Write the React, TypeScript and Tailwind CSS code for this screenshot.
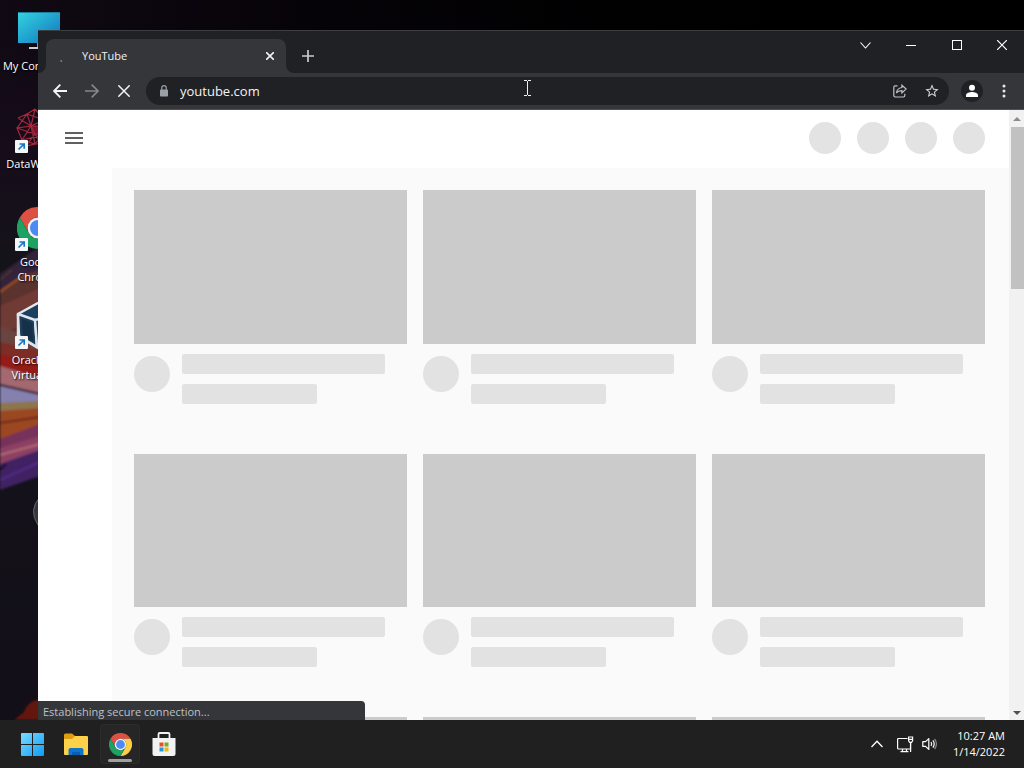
import type { ReactNode } from "react";

const videos = Array.from({ length: 9 }, (_, i) => i);
const headerDots = [0, 1, 2, 3];

function ChromeLogo({ className }: { className?: string }) {
  return (
    <svg viewBox="3 3 42 42" className={className} aria-hidden="true">
      <path d="M5.8 13.5A21 21 0 0 1 42.2 13.5H24A10.5 10.5 0 0 0 14.9 29.25Z" fill="#dd5144" />
      <path d="M42.2 13.5A21 21 0 0 1 24 45L33.1 29.25A10.5 10.5 0 0 0 24 13.5Z" fill="#ffcd46" />
      <path d="M24 45A21 21 0 0 1 5.8 13.5L14.9 29.25A10.5 10.5 0 0 0 33.1 29.25Z" fill="#1da261" />
      <circle cx="24" cy="24" r="10.5" fill="#f1f1f1" />
      <circle cx="24" cy="24" r="8" fill="#4c8bf5" />
    </svg>
  );
}

function ComputerIcon() {
  return (
    <svg viewBox="0 0 48 48" className="size-12" aria-hidden="true">
      <defs>
        <linearGradient id="screen" x1="0" y1="0" x2="1" y2="1">
          <stop offset="0" stopColor="#35d3e0" />
          <stop offset="1" stopColor="#0f74bd" />
        </linearGradient>
      </defs>
      <rect x="4" y="4" width="42" height="31" fill="url(#screen)" />
      <path d="M4 4.5H46" stroke="#1a7f9c" />
      <path d="M23 35h4v4h-4z" fill="#8c9094" />
      <path d="M15 39h20v2H15z" fill="#c9cdd0" />
    </svg>
  );
}

function DataWarriorIcon() {
  return (
    <svg viewBox="0 0 48 48" className="size-12" fill="none" stroke="#a5283d" strokeWidth="1.2" aria-hidden="true">
      <path d="M4 12l9-4 8-5M3 22l10-14 4 12-14 2 5 12 9-14 13-6-9-11M8 34l4 6 9-2-4-18M4 12l13 8M17 20l11 9-7 9-13-4 20-5M13 8l17 6-2 15M12 40l9-12 9 15M3 22l18 6M21 3l-4 17" />
      <path d="M30 14l12 4-14 11 13 8-20 1M28 3l2 11" />
      <path d="M17 20l4 8 7 1-3-9z" fill="#7d1429" />
    </svg>
  );
}

function VirtualBoxIcon() {
  return (
    <svg viewBox="0 0 48 48" className="size-12" strokeLinejoin="round" aria-hidden="true">
      <path d="M4 12L24 1l20 11v22L24 46 4 34z" fill="#1c3f5e" stroke="#e3e8ee" strokeWidth="2.5" />
      <path d="M4 12L21 18l2 27L5 34z" fill="#1d3c57" stroke="#dfe5ec" strokeWidth="2.5" />
      <path d="M21 18L44 12V34L23 45z" fill="#23486a" stroke="#dfe5ec" strokeWidth="2.5" />
      <path d="M8 17l10 4 1 18-10-6z" fill="#17304a" />
    </svg>
  );
}

function DesktopIcon({ label, shortcut, children }: { label: ReactNode; shortcut?: boolean; children: ReactNode }) {
  return (
    <a href="#" className="flex h-[98px] w-19 flex-col items-center text-center">
      <span className="relative block size-12">
        {children}
        {shortcut && (
          <svg viewBox="0 0 13 13" className="absolute bottom-px left-px size-[13px]" aria-hidden="true">
            <rect width="13" height="13" rx="1" fill="#f4f6f8" />
            <path d="M3.5 9.5L8.5 4.5M4.5 4h4.7v4.7" fill="none" stroke="#1976c5" strokeWidth="1.7" />
          </svg>
        )}
      </span>
      <span className="mt-0.5 text-[11px] leading-[15px] whitespace-nowrap text-white [text-shadow:1px_1px_2px_#000]">
        {label}
      </span>
    </a>
  );
}

function Wallpaper() {
  return (
    <svg viewBox="0 0 76 720" className="absolute top-0 left-0 h-[720px] w-19" aria-hidden="true">
      <defs>
        <filter id="soft" x="-20%" y="-5%" width="140%" height="110%">
          <feGaussianBlur stdDeviation="0.8" />
        </filter>
        <linearGradient id="night" x1="0" y1="0" x2="0" y2="1">
          <stop offset="0.05" stopColor="#160c1a" stopOpacity="0" />
          <stop offset="0.2" stopColor="#160c1a" />
          <stop offset="0.35" stopColor="#15131a" />
          <stop offset="1" stopColor="#120f18" />
        </linearGradient>
      </defs>
      <rect width="76" height="720" fill="url(#night)" />
      <g filter="url(#soft)">
        <path d="M0 274L40 246V300H0z" fill="#33223a" />
        <path d="M0 290L22 275 40 270V360H0z" fill="#5a302d" />
        <path d="M0 292L24 275" stroke="#a3531d" strokeWidth="2" />
        <path d="M0 280L12 270" stroke="#5a3a24" strokeWidth="1.5" />
        <path d="M0 306L40 288V322L0 332z" fill="#713b35" />
        <path d="M0 326L40 340V364L0 350z" fill="#6b4440" />
        <path d="M0 342L40 350V366L0 358z" fill="#7c2e28" />
        <path d="M0 354L40 362V378L0 368z" fill="#931a14" />
        <path d="M0 366L40 378V394L0 386z" fill="#a3686f" />
        <path d="M0 384L40 394V404L0 404z" fill="#8580ad" />
        <path d="M0 385L40 394" stroke="#2c1a2d" strokeWidth="2" />
        <path d="M0 403L40 401V412H0z" fill="#8d744e" />
        <path d="M0 411L40 408V436L0 440z" fill="#9b4620" />
        <path d="M0 423L40 417" stroke="#6d2b1c" strokeWidth="2" />
        <path d="M0 439L40 424V444L0 456z" fill="#77305b" />
        <path d="M0 448L40 436V452L0 466z" fill="#8c4164" />
        <path d="M0 455L40 444" stroke="#b26a72" strokeWidth="2" />
        <path d="M0 464L40 450V476L0 490z" fill="#3f2162" />
        <path d="M0 480L40 462" stroke="#4f2c80" strokeWidth="3" />
        <path d="M0 470L6 464" stroke="#150d1d" strokeWidth="2" />
        <path d="M14 720L24 712C26 705 33 699 40 700V720z" fill="#64180c" />
      </g>
      <path d="M40 497Q28 510 38 525" fill="#35353a" stroke="#65666b" />
    </svg>
  );
}

function TabStrip() {
  return (
    <div className="flex h-[43px] shrink-0 border-t border-[#3d3e41] bg-[#202124] pl-2">
      <div className="relative mt-2 flex w-60 items-center rounded-t-lg bg-[#35363a] pr-2">
        <svg viewBox="0 0 8 8" className="absolute bottom-0 -left-2 size-2" aria-hidden="true">
          <path d="M8 0v8H0a8 8 0 0 0 8-8z" fill="#35363a" />
        </svg>
        <svg viewBox="0 0 8 8" className="absolute -right-2 bottom-0 size-2" aria-hidden="true">
          <path d="M0 0v8h8a8 8 0 0 1-8-8z" fill="#35363a" />
        </svg>
        <svg viewBox="0 0 16 16" className="ml-2 size-4" aria-hidden="true">
          <path d="M6.5 12.5l1.5 1" stroke="#7f93c8" strokeWidth="1.3" />
        </svg>
        <span className="ml-3 flex-1 text-[11px] leading-4 text-[#f1f3f4]">YouTube</span>
        <button type="button" aria-label="Close tab" className="flex size-4 items-center justify-center">
          <svg viewBox="0 0 8 8" className="size-2" stroke="#f1f3f4" strokeWidth="1.6" aria-hidden="true">
            <path d="M0 0l8 8M8 0L0 8" />
          </svg>
        </button>
      </div>
      <button type="button" aria-label="New tab" className="mt-[11px] ml-2 flex size-7 items-center justify-center">
        <svg viewBox="0 0 12 12" className="size-3" stroke="#c9cbce" strokeWidth="1.7" aria-hidden="true">
          <path d="M6 0v12M0 6h12" />
        </svg>
      </button>
      <div className="ml-auto flex h-7 text-white">
        <button type="button" aria-label="Search tabs" className="flex w-[46px] items-center justify-center">
          <svg viewBox="0 0 11 7" className="h-[7px] w-[11px]" fill="none" stroke="currentColor" strokeWidth="1.1" aria-hidden="true">
            <path d="M0.5 0.5l5 5.5 5-5.5" />
          </svg>
        </button>
        <button type="button" aria-label="Minimize" className="flex w-[46px] items-center justify-center">
          <span className="h-px w-2.5 bg-white" />
        </button>
        <button type="button" aria-label="Maximize" className="flex w-[46px] items-center justify-center">
          <span className="size-2.5 border border-white" />
        </button>
        <button type="button" aria-label="Close" className="flex w-11 items-center justify-center">
          <svg viewBox="0 0 10 10" className="size-2.5" stroke="currentColor" strokeWidth="1.2" aria-hidden="true">
            <path d="M0 0l10 10M10 0L0 10" />
          </svg>
        </button>
      </div>
    </div>
  );
}

function Toolbar() {
  return (
    <div className="flex h-[37px] shrink-0 items-center border-b border-[#505155] bg-[#35363a] pr-1 pl-1.5">
      <button type="button" aria-label="Back" className="flex size-8 items-center justify-center">
        <svg viewBox="0 0 14 14" className="size-3.5" fill="none" stroke="#f5f6f7" strokeWidth="1.9" aria-hidden="true">
          <path d="M14 7H1.5M7.3 0.7L1 7l6.3 6.3" />
        </svg>
      </button>
      <button type="button" aria-label="Forward" className="flex size-8 items-center justify-center">
        <svg viewBox="0 0 14 14" className="size-3.5" fill="none" stroke="#85868a" strokeWidth="1.7" aria-hidden="true">
          <path d="M0 7h12.5M6.7 0.7L13 7l-6.3 6.3" />
        </svg>
      </button>
      <button type="button" aria-label="Stop loading" className="flex size-8 items-center justify-center">
        <svg viewBox="0 0 12 12" className="size-3" stroke="#f1f3f4" strokeWidth="1.5" aria-hidden="true">
          <path d="M0.3 0.3l11.4 11.4M11.7 0.3L0.3 11.7" />
        </svg>
      </button>
      <div className="mr-[7px] ml-1.5 flex h-7 flex-1 items-center rounded-full bg-[#202124] pr-px pl-3.5">
        <svg viewBox="0 0 8 12" className="h-3 w-2" aria-hidden="true">
          <path d="M1.8 5V2.8a2.2 2.2 0 0 1 4.4 0V5" fill="none" stroke="#9aa0a6" strokeWidth="1.2" />
          <rect y="4.5" width="8" height="7" rx="0.8" fill="#9aa0a6" />
        </svg>
        <input
          type="text"
          aria-label="Address and search bar"
          defaultValue="youtube.com"
          className="ml-3 min-w-0 flex-1 bg-transparent text-[13px] leading-5 text-[#f1f3f4] outline-none"
        />
        <button type="button" aria-label="Share this page" className="flex size-8 items-center justify-center">
          <svg viewBox="0 0 14 14" className="size-3.5" fill="none" stroke="#bdc1c6" strokeWidth="1.2" aria-hidden="true">
            <path d="M4.5 1.8H2.2Q0.8 1.8 0.8 3.2v8.4q0 1.4 1.4 1.4h8.2q1.4 0 1.4-1.4v-1.8" />
            <path d="M8.9 1.2l4.3 3.8-4.3 3.9V6.6Q5.2 6.5 3.4 9 4 4.2 8.9 3.5z" />
          </svg>
        </button>
        <button type="button" aria-label="Bookmark this tab" className="flex size-8 items-center justify-center">
          <svg viewBox="0 0 24 24" className="size-4" fill="#d0d3d6" aria-hidden="true">
            <path d="M22 9.24l-7.19-.62L12 2 9.19 8.63 2 9.24l5.46 4.73L5.82 21 12 17.27 18.18 21l-1.63-7.03L22 9.24zM12 15.4l-3.76 2.27 1-4.28-3.32-2.88 4.38-.38L12 6.1l1.71 4.04 4.38.38-3.32 2.88 1 4.28L12 15.4z" />
          </svg>
        </button>
      </div>
      <button type="button" aria-label="Profile" className="flex size-8 items-center justify-center">
        <svg viewBox="0 0 24 24" className="size-6" aria-hidden="true">
          <circle cx="12" cy="12" r="11" fill="#202124" />
          <circle cx="12" cy="8.7" r="3" fill="#fff" />
          <path d="M6 18v-1.8c0-2 3.6-3.2 6-3.2s6 1.2 6 3.2V18z" fill="#fff" />
        </svg>
      </button>
      <button type="button" aria-label="Menu" className="flex size-8 items-center justify-center">
        <svg viewBox="0 0 4 14" className="h-3.5 w-1" fill="#e8eaed" aria-hidden="true">
          <circle cx="2" cy="2" r="1.5" />
          <circle cx="2" cy="7" r="1.5" />
          <circle cx="2" cy="12" r="1.5" />
        </svg>
      </button>
    </div>
  );
}

function VideoSkeleton() {
  return (
    <div className="h-fit pb-[50px]">
      <div className="aspect-video bg-[#cbcbcb]" />
      <div className="mt-2.5 flex gap-3">
        <div className="mt-0.5 size-9 shrink-0 rounded-full bg-[#e2e2e2]" />
        <div className="flex-1">
          <div className="h-5 w-9/10 rounded-xs bg-[#e2e2e2]" />
          <div className="mt-2.5 h-5 w-3/5 rounded-xs bg-[#e2e2e2]" />
        </div>
      </div>
    </div>
  );
}

function Page() {
  return (
    <div className="flex min-h-0 flex-1 bg-white">
      <div className="flex min-w-0 flex-1 flex-col overflow-hidden">
        <header className="flex h-[58px] shrink-0 items-center justify-between pr-6 pb-0.5 pl-[27px]">
          <button type="button" aria-label="Guide" className="flex w-[18px] flex-col gap-[3px]">
            <span className="h-0.5 bg-[#606060]" />
            <span className="h-0.5 bg-[#606060]" />
            <span className="h-0.5 bg-[#606060]" />
          </button>
          <div className="flex gap-4">
            {headerDots.map((d) => (
              <div key={d} className="size-8 rounded-full bg-[#e3e3e3]" />
            ))}
          </div>
        </header>
        <main className="ml-[74px] grid min-h-0 flex-1 grid-cols-3 content-start gap-x-4 overflow-hidden bg-[#fafafa] pt-[22px] pr-6 pl-[22px]">
          {videos.map((v) => (
            <VideoSkeleton key={v} />
          ))}
        </main>
      </div>
      <div className="flex w-[15px] flex-col items-center bg-[#f1f1f1]">
        <svg viewBox="0 0 15 17" className="h-[17px] w-[15px]" fill="#8b8b8b" aria-hidden="true">
          <path d="M4 11l4-4 4 4z" />
        </svg>
        <div className="ml-0.5 h-[162px] w-[13px] bg-[#c1c1c1]" />
        <svg viewBox="0 0 15 17" className="mt-auto h-[17px] w-[15px]" fill="#505050" aria-hidden="true">
          <path d="M4 8l4 4 4-4z" />
        </svg>
      </div>
    </div>
  );
}

function Taskbar() {
  return (
    <footer className="flex h-12 shrink-0 items-center bg-[#202020] pr-[19px] pl-2.5">
      <button type="button" aria-label="Start" className="flex size-11 items-center justify-center">
        <svg viewBox="0 0 23 23" className="size-[23px]" aria-hidden="true">
          <defs>
            <linearGradient id="win" x1="0" y1="0" x2="1" y2="1">
              <stop offset="0" stopColor="#7bdcff" />
              <stop offset="1" stopColor="#0e9bf5" />
            </linearGradient>
          </defs>
          <path d="M1 0h10v11H0V1q0-1 1-1zM12 0h10q1 0 1 1v10H12zM0 12h11v11H1q-1 0-1-1zM12 12h11v10q0 1-1 1H12z" fill="url(#win)" />
        </svg>
      </button>
      <button type="button" aria-label="File Explorer" className="flex size-11 items-center justify-center">
        <svg viewBox="0 0 24 24" className="size-6" aria-hidden="true">
          <path d="M0 3q0-1.5 1.5-1.5H8L11 4v5H0z" fill="#dc9f12" />
          <path d="M0 7h8l3-3h12q1 0 1 1v17q0 1-1 1H1q-1 0-1-1z" fill="#fbd24a" />
          <path d="M4.5 23v-5q0-2 2-2h11q2 0 2 2v5z" fill="#1273ca" />
          <path d="M8 23v-2q0-1 1-1h6q1 0 1 1v2z" fill="#0b5bb0" />
        </svg>
      </button>
      <button type="button" aria-label="Google Chrome" className="relative flex size-11 items-center justify-center">
        <span className="absolute inset-0.5 rounded border border-[#2c2c2c] bg-[#272626]" />
        <ChromeLogo className="relative size-[23px]" />
        <span className="absolute bottom-1 h-[3px] w-6 rounded-full bg-[#a0a0a0]" />
      </button>
      <button type="button" aria-label="Microsoft Store" className="flex size-11 items-center justify-center">
        <svg viewBox="0 0 24 24" className="size-6" aria-hidden="true">
          <path d="M6.5 6V2.2q0-1.2 1.2-1.2h8.6q1.2 0 1.2 1.2V6" fill="none" stroke="#f2f2f2" strokeWidth="1.8" />
          <path d="M0.5 6h23v16q0 2-2 2h-19q-2 0-2-2z" fill="#f2f2f2" />
          <path d="M7.5 10.5h4v4h-4z" fill="#e5502a" />
          <path d="M12.5 10.5h4v4h-4z" fill="#79ad1e" />
          <path d="M7.5 15.5h4v4h-4z" fill="#1e9ad6" />
          <path d="M12.5 15.5h4v4h-4z" fill="#f2b31b" />
        </svg>
      </button>
      <div className="ml-auto flex items-center text-white">
        <button type="button" aria-label="Show hidden icons" className="mr-3.5">
          <svg viewBox="0 0 12 8" className="h-2 w-3" fill="none" stroke="currentColor" strokeWidth="1.3" aria-hidden="true">
            <path d="M0.5 7L6 1.2 11.5 7" />
          </svg>
        </button>
        <button type="button" aria-label="Network and volume" className="mr-4 flex items-center gap-2">
          <svg viewBox="0 0 17 17" className="size-[17px]" fill="none" stroke="currentColor" strokeWidth="1.2" aria-hidden="true">
            <path d="M10.5 2.5H1.6Q0.6 2.5 0.6 3.5v8.5q0 1 1 1H13.5V6.5" />
            <path d="M3.5 15.6h8M5.5 13v2.6M9.5 13v2.6M11.6 1h4v3.8l-1.1 1.6h-1.8l-1.1-1.6zM11.6 3.4h4M13.6 6.5V16" />
          </svg>
          <svg viewBox="0 0 15 14" className="h-3.5 w-[15px]" fill="none" stroke="currentColor" strokeWidth="1.2" aria-hidden="true">
            <path d="M6.8 1.6v10.8L3.6 9.4H0.8V4.6h2.8z" strokeLinejoin="round" />
            <path d="M9 5q1.4 2 0 4M10.9 3.4q2.6 3.6 0 7.2" />
            <path d="M12.6 1.8q3.6 5.2 0 10.4" stroke="#8a8a8a" />
          </svg>
        </button>
        <button type="button" className="text-right text-[11px] leading-4">
          <span className="block">10:27 AM</span>
          <span className="block">1/14/2022</span>
        </button>
      </div>
    </footer>
  );
}

export default function App() {
  return (
    <div className="flex h-screen flex-col overflow-hidden bg-[#09060a] font-['Open_Sans','Noto_Sans',sans-serif]">
      <div className="relative min-h-0 flex-1 overflow-hidden bg-linear-to-r from-[#110a14] to-black">
        <Wallpaper />
        <nav aria-label="Desktop" className="relative flex w-19 flex-col pt-2">
          <DesktopIcon label="My Computer">
            <ComputerIcon />
          </DesktopIcon>
          <DesktopIcon label="DataWarrior" shortcut>
            <DataWarriorIcon />
          </DesktopIcon>
          <DesktopIcon
            shortcut
            label={
              <>
                Google
                <br />
                Chrome
              </>
            }
          >
            <ChromeLogo className="m-[3px] size-[42px]" />
          </DesktopIcon>
          <DesktopIcon
            shortcut
            label={
              <>
                Oracle VM
                <br />
                VirtualBox
              </>
            }
          >
            <VirtualBoxIcon />
          </DesktopIcon>
        </nav>

        {/* Browser window, floating over the desktop icons */}
        <section aria-label="YouTube" className="absolute top-[30px] right-0 bottom-0 left-[38px] flex flex-col">
          <TabStrip />
          <Toolbar />
          <Page />
          <div className="absolute bottom-0 left-0 h-[19px] w-[327px] rounded-tr bg-[#35363a] px-[5px] text-[11px] leading-[22px] text-[#bdc1c6]">
            Establishing secure connection...
          </div>
        </section>

        {/* Text cursor */}
        <svg viewBox="0 0 7 16" className="absolute top-20 left-[524px] h-4 w-[7px]" stroke="#f0f0f0" fill="none" aria-hidden="true">
          <path d="M0 0.5h3M4 0.5h3M3.5 1v14M0 15.5h3M4 15.5h3" />
        </svg>
      </div>
      <Taskbar />
    </div>
  );
}
